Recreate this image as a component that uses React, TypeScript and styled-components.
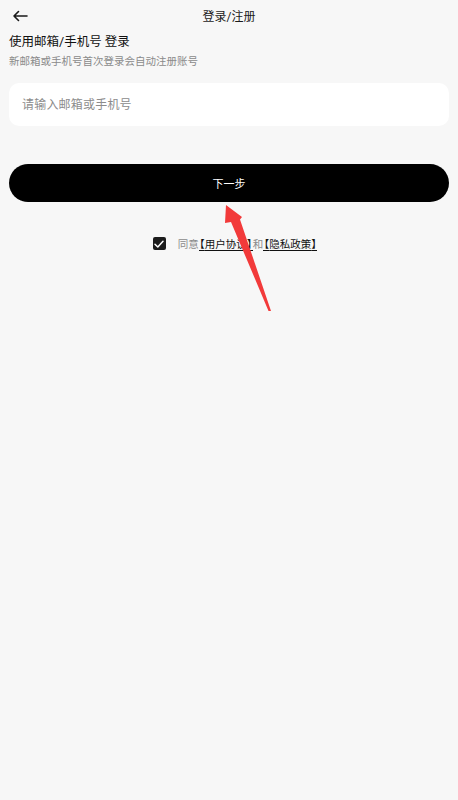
import React, { FC, useState } from "react";
import styled, { createGlobalStyle } from "styled-components";

const GlobalStyle = createGlobalStyle`
  html, body {
    margin: 0;
    padding: 0;
    background-color: #f7f7f7;
  }
  body {
    font-family: Roboto, "Noto Sans CJK SC", sans-serif;
    color: #111111;
  }
`;

const Page = styled.div`
  position: relative;
  min-height: 800px;
  padding: 0 9px;
  box-sizing: border-box;
  background-color: #f7f7f7;
`;

const Header = styled.div`
  position: relative;
  height: 33px;
  display: flex;
  align-items: center;
  justify-content: center;
`;

const BackButton = styled.button`
  position: absolute;
  left: 1px;
  top: 7px;
  width: 20px;
  height: 18px;
  padding: 0;
  border: none;
  background: transparent;
  display: flex;
  align-items: center;
  justify-content: center;
`;

const HeaderTitle = styled.div`
  margin-top: -2px;
  font-size: 12px;
  color: #1a1a1a;
`;

const Title = styled.div`
  font-size: 12.5px;
  line-height: 18px;
  color: #111111;
`;

const Subtitle = styled.div`
  margin-top: 3px;
  font-size: 10.5px;
  line-height: 16px;
  color: #8a8a8a;
`;

const InputBox = styled.div`
  margin-top: 13px;
  height: 43px;
  border-radius: 10px;
  background-color: #ffffff;
  display: flex;
  align-items: center;
  padding: 0 13px;
`;

const Input = styled.input`
  flex: 1;
  border: none;
  outline: none;
  padding: 0;
  background: transparent;
  font-family: inherit;
  font-size: 12px;
  letter-spacing: 0.2px;
  color: #111111;

  &::placeholder {
    color: #8c8c8c;
  }
`;

const NextButton = styled.button`
  margin-top: 38px;
  width: 100%;
  height: 38px;
  border: none;
  border-radius: 19px;
  background-color: #000000;
  color: #ffffff;
  font-family: inherit;
  font-size: 11px;
`;

const AgreeRow = styled.div`
  margin-top: 34px;
  display: flex;
  align-items: center;
  justify-content: center;
  padding-left: 12px;
  gap: 12px;
`;

const CheckBox = styled.span<{ $checked: boolean }>`
  flex-shrink: 0;
  width: 13px;
  height: 13px;
  border-radius: 2px;
  background-color: ${(p) => (p.$checked ? "#1c1c1c" : "transparent")};
  border: ${(p) => (p.$checked ? "none" : "1px solid #999")};
  display: flex;
  align-items: center;
  justify-content: center;
`;

const AgreeText = styled.div`
  white-space: nowrap;
  font-size: 10.5px;
  color: #8a8a8a;
`;

const Link = styled.span`
  color: #111111;
  text-decoration: underline;
  text-underline-offset: 2px;
`;

const Bracket = styled.span<{ $open?: boolean }>`
  display: inline-block;
  width: 6px;
  overflow: hidden;
  vertical-align: bottom;
  text-indent: ${(p) => (p.$open ? "-4.5px" : "0")};
  text-decoration: underline;
  text-underline-offset: 2px;
`;

const Annotation = styled.svg`
  position: absolute;
  left: 0;
  top: 0;
  pointer-events: none;
`;

const App: FC = () => {
  const [checked, setChecked] = useState(true);

  return (
    <>
      <GlobalStyle />
      <Page>
        <Header>
          <BackButton>
            <svg width="16" height="12" viewBox="0 0 16 12" fill="none">
              <path
                d="M15 6H2M6.5 1.5L2 6l4.5 4.5"
                stroke="#1a1a1a"
                strokeWidth="1.6"
                strokeLinecap="round"
                strokeLinejoin="round"
              />
            </svg>
          </BackButton>
          <HeaderTitle>登录/注册</HeaderTitle>
        </Header>
        <Title>使用邮箱/手机号 登录</Title>
        <Subtitle>新邮箱或手机号首次登录会自动注册账号</Subtitle>
        <InputBox>
          <Input placeholder="请输入邮箱或手机号" />
        </InputBox>
        <NextButton>下一步</NextButton>
        <AgreeRow>
          <CheckBox $checked={checked} onClick={() => setChecked(!checked)}>
            {checked && (
              <svg width="10" height="8" viewBox="0 0 10 8" fill="none">
                <path
                  d="M1 4.2L3.8 7 9 1.2"
                  stroke="#ffffff"
                  strokeWidth="1.5"
                  strokeLinecap="round"
                  strokeLinejoin="round"
                />
              </svg>
            )}
          </CheckBox>
          <AgreeText>
            同意
            <Link>
              <Bracket $open>【</Bracket>用户协议<Bracket>】</Bracket>
            </Link>
            和
            <Link>
              <Bracket $open>【</Bracket>隐私政策<Bracket>】</Bracket>
            </Link>
          </AgreeText>
        </AgreeRow>
        <Annotation width="458" height="800" viewBox="0 0 458 800">
          <polygon
            points="226,205 242,217 240,219.5 271,311 268.5,311 231,222 225,223"
            fill="#f23a3a"
          />
        </Annotation>
      </Page>
    </>
  );
};

export default App;
